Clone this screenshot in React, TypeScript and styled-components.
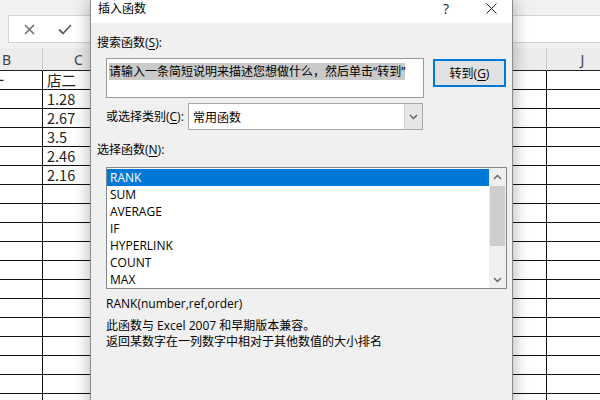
import React from 'react';
import styled, { createGlobalStyle } from 'styled-components';

const Global = createGlobalStyle`
  html, body { margin: 0; padding: 0; background: #fff; }
  #root { width: 600px; height: 400px; }
`;

const Page = styled.div`
  position: relative;
  width: 600px;
  height: 400px;
  overflow: hidden;
  background: #fff;
  font-family: "Noto Sans CJK SC", sans-serif;
`;

const Sheet = styled.div`
  display: flex;
  flex-direction: column;
`;

const FormulaBar = styled.div`
  height: 48px;
  box-sizing: border-box;
  background: #f1f1f1;
  padding: 15px 0 5px 8px;
  display: flex;
`;

const FormulaBox = styled.div`
  flex: 1;
  background: #fff;
  border: 1px solid #d4d4d4;
  border-right: none;
  display: flex;
  align-items: center;
  padding-left: 13px;
  gap: 22px;
`;

const IconBtn = styled.span`
  display: flex;
  width: 14px;
  height: 14px;
  align-items: center;
  justify-content: center;
`;

const Grid = styled.div`
  display: grid;
  grid-template-columns: repeat(9, 72px);
  margin-left: -29px;
`;

const HeadCell = styled.div`
  height: 23px;
  box-sizing: border-box;
  background: #ececec;
  border-right: 1px solid #cfcfcf;
  border-bottom: 1px solid #222;
  display: flex;
  align-items: center;
  justify-content: center;
  font-family: "Noto Sans", sans-serif;
  font-size: 14px;
  color: #444;
`;

const Cell = styled.div`
  height: 19px;
  box-sizing: border-box;
  border-right: 1px solid #111;
  border-bottom: 1px solid #111;
  padding-left: 4px;
  font-size: 14.5px;
  line-height: 18px;
  color: #222;
  white-space: nowrap;
`;

const Dialog = styled.div`
  position: absolute;
  left: 90px;
  top: 0;
  width: 423px;
  height: 412px;
  box-sizing: border-box;
  border: 1px solid #8c8c8c;
  border-top: none;
  background: #f0f0f0;
  box-shadow: 0 0 16px rgba(0, 0, 0, 0.32);
  display: flex;
  flex-direction: column;
  font-family: "Open Sans", "Noto Sans CJK SC", sans-serif;
  font-size: 12px;
  color: #000;
`;

const TitleBar = styled.div`
  height: 23px;
  background: #fff;
  display: flex;
  align-items: flex-start;
  padding-left: 7px;
`;

const Title = styled.div`
  line-height: 17px;
  flex: 1;
`;

const TitleBtn = styled.div<{ $w: number }>`
  width: ${p => p.$w}px;
  height: 17px;
  display: flex;
  align-items: center;
  justify-content: center;
  font-size: 14px;
  color: #222;
`;

const Body = styled.div`
  display: flex;
  flex-direction: column;
  padding: 0 6px;
`;

const Label = styled.div<{ $mt: number }>`
  margin-top: ${p => p.$mt}px;
  line-height: 16px;
  white-space: nowrap;
`;

const U = styled.span`
  text-decoration: underline;
  text-underline-offset: 2px;
`;

const SearchRow = styled.div`
  display: flex;
  align-items: flex-start;
  gap: 9px;
  margin-top: 7px;
  margin-left: 9px;
`;

const SearchBox = styled.div`
  width: 318px;
  height: 40px;
  box-sizing: border-box;
  background: #fff;
  border: 1px solid #9a9a9a;
  padding: 4px 2px;
  line-height: 17px;
  white-space: nowrap;
  overflow: hidden;
`;

const Selected = styled.span`
  background: #cacaca;
`;

const GoButton = styled.div`
  margin-top: 1px;
  width: 73px;
  height: 28px;
  box-sizing: border-box;
  border: 2px solid #0078d7;
  background: #e1e1e1;
  display: flex;
  align-items: center;
  justify-content: center;
`;

const CategoryRow = styled.div`
  display: flex;
  align-items: center;
  margin-top: 5px;
  margin-left: 9px;
`;

const CatLabel = styled.div`
  width: 82px;
  line-height: 16px;
  white-space: nowrap;
`;

const Combo = styled.div`
  width: 235px;
  height: 27px;
  box-sizing: border-box;
  border: 1px solid #a9a9a9;
  background: #fff;
  display: flex;
  align-items: stretch;
`;

const ComboText = styled.div`
  flex: 1;
  padding-left: 4px;
  display: flex;
  align-items: center;
`;

const ComboArrow = styled.div`
  width: 17px;
  background: #e6e6e6;
  border-left: 1px solid #cfcfcf;
  display: flex;
  align-items: center;
  justify-content: center;
`;

const ListBox = styled.div`
  margin-top: 9px;
  margin-left: 9px;
  width: 401px;
  height: 122px;
  box-sizing: border-box;
  border: 1px solid #828790;
  background: #fff;
  display: flex;
`;

const Items = styled.div`
  flex: 1;
  padding-top: 1px;
  display: flex;
  flex-direction: column;
`;

const Item = styled.div<{ $sel?: boolean }>`
  height: 17px;
  line-height: 17px;
  padding-left: 3px;
  background: ${p => (p.$sel ? '#0078d7' : 'transparent')};
  color: ${p => (p.$sel ? '#fff' : '#000')};
`;

const ScrollBar = styled.div`
  width: 17px;
  background: #f0f0f0;
  display: flex;
  flex-direction: column;
`;

const ScrollArrow = styled.div`
  height: 17px;
  display: flex;
  align-items: center;
  justify-content: center;
`;

const Thumb = styled.div`
  margin: 1px 1px 0 1px;
  height: 60px;
  background: #cdcdcd;
`;

const Track = styled.div`
  flex: 1;
`;

const Text = styled.div<{ $mt?: number }>`
  margin-top: ${p => p.$mt || 0}px;
  margin-left: 9px;
  line-height: 16px;
  white-space: nowrap;
`;

const Chevron = ({ up }: { up?: boolean }) => (
  <svg width="9" height="6" viewBox="0 0 9 6">
    <path
      d={up ? 'M1 5 L4.5 1.5 L8 5' : 'M1 1 L4.5 4.5 L8 1'}
      fill="none"
      stroke="#606060"
      strokeWidth="1.4"
    />
  </svg>
);

const bData = ['店一'];
const cData = ['店二', '1.28', '2.67', '3.5', '2.46', '2.16'];
const cols = ['B', 'C', 'D', 'E', 'F', 'G', 'H', 'I', 'J'];
const funcs = ['RANK', 'SUM', 'AVERAGE', 'IF', 'HYPERLINK', 'COUNT', 'MAX'];

export default function App() {
  const rows = Array.from({ length: 18 }, (_, i) => i);
  const cellText = (r: number, ci: number) =>
    ci === 0 ? bData[r] || '' : ci === 1 ? cData[r] || '' : '';
  return (
    <Page>
      <Global />
      <Sheet>
        <FormulaBar>
          <FormulaBox>
            <IconBtn>
              <svg width="11" height="11" viewBox="0 0 11 11">
                <path d="M1 1 L10 10 M10 1 L1 10" stroke="#707070" strokeWidth="1.6" />
              </svg>
            </IconBtn>
            <IconBtn>
              <svg width="14" height="11" viewBox="0 0 14 11">
                <path d="M1 5.5 L5 9.5 L13 1" fill="none" stroke="#606060" strokeWidth="1.8" />
              </svg>
            </IconBtn>
          </FormulaBox>
        </FormulaBar>
        <Grid>
          {cols.map(c => (
            <HeadCell key={c}>{c}</HeadCell>
          ))}
          {rows.map(r =>
            cols.map((c, ci) => <Cell key={`${r}-${c}`}>{cellText(r, ci)}</Cell>)
          )}
        </Grid>
      </Sheet>

      <Dialog>
        <TitleBar>
          <Title>插入函数</Title>
          <TitleBtn $w={48}>?</TitleBtn>
          <TitleBtn $w={42}>
            <svg width="11" height="11" viewBox="0 0 11 11">
              <path d="M0.5 0.5 L10.5 10.5 M10.5 0.5 L0.5 10.5" stroke="#222" strokeWidth="1" />
            </svg>
          </TitleBtn>
        </TitleBar>
        <Body>
          <Label $mt={12}>
            搜索函数(<U>S</U>):
          </Label>
          <SearchRow>
            <SearchBox>
              <Selected>请输入一条简短说明来描述您想做什么，然后单击“转到”</Selected>
            </SearchBox>
            <GoButton>
              转到(<U>G</U>)
            </GoButton>
          </SearchRow>
          <CategoryRow>
            <CatLabel>
              或选择类别(<U>C</U>):
            </CatLabel>
            <Combo>
              <ComboText>常用函数</ComboText>
              <ComboArrow>
                <Chevron />
              </ComboArrow>
            </Combo>
          </CategoryRow>
          <Label $mt={12}>
            选择函数(<U>N</U>):
          </Label>
          <ListBox>
            <Items>
              {funcs.map((f, i) => (
                <Item key={f} $sel={i === 0}>
                  {f}
                </Item>
              ))}
            </Items>
            <ScrollBar>
              <ScrollArrow>
                <Chevron up />
              </ScrollArrow>
              <Thumb />
              <Track />
              <ScrollArrow>
                <Chevron />
              </ScrollArrow>
            </ScrollBar>
          </ListBox>
          <Text $mt={7}>RANK(number,ref,order)</Text>
          <Text $mt={6}>此函数与 Excel 2007 和早期版本兼容。</Text>
          <Text>返回某数字在一列数字中相对于其他数值的大小排名</Text>
        </Body>
      </Dialog>
    </Page>
  );
}
